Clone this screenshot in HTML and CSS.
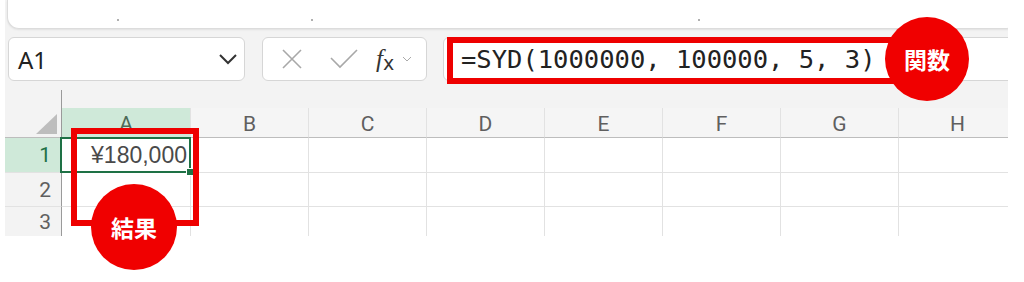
FILE: index.html
```html
<!DOCTYPE html>
<html lang="ja">
<head>
    <meta charset="UTF-8">
    <title>SYD関数</title>
    <link rel="stylesheet" href="styles.css">
</head>
<body>
    <div class="page">
        <div class="app">
            <div class="ribbon">
                <span class="dot dot-1"></span>
                <span class="dot dot-2"></span>
                <span class="dot dot-3"></span>
            </div>

            <div class="formula-row">
                <div class="name-box">
                    <span>A1</span>
                    <svg width="20" height="12" viewBox="0 0 20 12"><path d="M2 2 L10 10 L18 2" fill="none" stroke="#333" stroke-width="2"/></svg>
                </div>
                <div class="fx-buttons">
                    <svg width="22" height="22" viewBox="0 0 22 22"><path d="M2 2 L20 20 M20 2 L2 20" stroke="#a8a8a8" stroke-width="1.6"/></svg>
                    <svg width="30" height="22" viewBox="0 0 30 22"><path d="M2 10 L11 19 L28 2" fill="none" stroke="#a8a8a8" stroke-width="1.6"/></svg>
                    <span class="fx">f<sub>x</sub></span>
                    <svg width="10" height="6" viewBox="0 0 10 6"><path d="M1 1 L5 5 L9 1" fill="none" stroke="#aaa" stroke-width="1"/></svg>
                </div>
                <div class="formula-bar">=SYD(1000000, 100000, 5, 3)</div>
            </div>

            <div class="gap-row"><div class="gap-line"></div></div>

            <div class="sheet">
                <div class="corner"></div>
                <div class="col-head active">A</div>
                <div class="col-head">B</div>
                <div class="col-head">C</div>
                <div class="col-head">D</div>
                <div class="col-head">E</div>
                <div class="col-head">F</div>
                <div class="col-head">G</div>
                <div class="col-head">H</div>

                <div class="row-head active">1</div>
                <div class="cell selected">¥180,000</div>
                <div class="cell"></div><div class="cell"></div><div class="cell"></div><div class="cell"></div>
                <div class="cell"></div><div class="cell"></div><div class="cell"></div>

                <div class="row-head">2</div>
                <div class="cell"></div><div class="cell"></div><div class="cell"></div><div class="cell"></div>
                <div class="cell"></div><div class="cell"></div><div class="cell"></div><div class="cell"></div>

                <div class="row-head">3</div>
                <div class="cell"></div><div class="cell"></div><div class="cell"></div><div class="cell"></div>
                <div class="cell"></div><div class="cell"></div><div class="cell"></div><div class="cell"></div>
            </div>
        </div>

        <!-- 赤枠と吹き出し -->
        <div class="mark mark-formula"></div>
        <div class="mark mark-result"></div>
        <div class="badge badge-func">関数</div>
        <div class="badge badge-result">結果</div>
    </div>
</body>
</html>
```

FILE: styles.css
```css
body {
    margin: 0;
    background: #ffffff;
    font-family: "Noto Sans", "Noto Sans CJK JP", sans-serif;
}
.page {
    position: relative;
    width: 1024px;
    height: 282px;
}
.app {
    margin-left: 5px;
    width: 1003px;
    height: 236px;
    background: #f3f3f3;
    overflow: hidden;
}
.ribbon {
    position: relative;
    height: 28px;
    margin-left: 2px;
    margin-right: -10px;
    background: #ffffff;
    border: 1px solid #dcdcdc;
    border-top: none;
    border-radius: 0 0 12px 12px;
    box-shadow: 0 1px 2px rgba(0, 0, 0, 0.08);
}
.dot {
    position: absolute;
    top: 19px;
    width: 2px;
    height: 2px;
    background: #b0b0b0;
}
.dot-1 { left: 109px; }
.dot-2 { left: 303px; }
.dot-3 { left: 690px; }

.formula-row {
    display: flex;
    gap: 17px;
    margin-top: 8px;
    margin-left: 3px;
    height: 44px;
}
.name-box {
    box-sizing: border-box;
    width: 237px;
    display: flex;
    align-items: center;
    justify-content: space-between;
    padding: 0 6px 0 9px;
    background: #ffffff;
    border: 1px solid #d6d6d6;
    border-radius: 6px;
    font-size: 24px;
    color: #222;
}
.fx-buttons {
    box-sizing: border-box;
    width: 165px;
    display: flex;
    align-items: center;
    gap: 0;
    padding: 0 8px 0 18px;
    background: #ffffff;
    border: 1px solid #d6d6d6;
    border-radius: 6px;
}
.fx-buttons svg:nth-child(2) { margin-left: 26px; }
.fx {
    margin-left: 17px;
    font-family: "Liberation Serif", serif;
    font-style: italic;
    font-size: 25px;
    color: #333;
}
.fx sub {
    font-family: "DejaVu Sans", sans-serif;
    font-style: normal;
    font-size: 19px;
    vertical-align: -3px;
}
.fx-buttons svg:last-child { margin-left: 8px; }
.formula-bar {
    flex: 1;
    margin-left: -1px;
    margin-right: -20px;
    display: flex;
    align-items: center;
    padding-left: 17px;
    background: #ffffff;
    border: 1px solid #d6d6d6;
    border-radius: 6px;
    font-family: "DejaVu Sans Mono", monospace;
    font-size: 25.5px;
    color: #222;
}
.gap-row {
    height: 27px;
    padding-top: 9px;
    box-sizing: border-box;
}
.gap-line {
    margin-left: 56px;
    width: 1px;
    height: 18px;
    background: #9a9a9a;
}

.sheet {
    display: grid;
    grid-template-columns: 57px 129px repeat(7, 118px);
    grid-template-rows: 30px 35px 34px 30px;
    font-family: "Roboto", "Liberation Sans", sans-serif;
}
.corner {
    position: relative;
    border-right: 1px solid #9a9a9a;
    border-bottom: 1px solid #bdbdbd;
}
.corner::after {
    content: "";
    position: absolute;
    right: 4px;
    bottom: 3px;
    width: 21px;
    height: 20px;
    background: #bdbdbd;
    clip-path: polygon(100% 0, 100% 100%, 0 100%);
}
.col-head {
    display: flex;
    align-items: center;
    justify-content: center;
    font-size: 21px;
    color: #5f5f5f;
    background: #f5f5f5;
    border-right: 1px solid #e2e2e2;
    border-bottom: 1px solid #bdbdbd;
    padding-top: 2px;
}
.col-head.active {
    background: #cfe9d9;
    color: #4d6b58;
}
.row-head {
    display: flex;
    align-items: center;
    justify-content: flex-end;
    padding-right: 10px;
    font-size: 21px;
    color: #5f5f5f;
    border-right: 1px solid #9a9a9a;
    border-bottom: 1px solid #e2e2e2;
}
.row-head.active {
    background: #cfe9d9;
    color: #1e7145;
}
.cell {
    background: #ffffff;
    border-right: 1px solid #e2e2e2;
    border-bottom: 1px solid #e2e2e2;
}
.cell.selected {
    position: relative;
    display: flex;
    align-items: center;
    justify-content: flex-end;
    padding-right: 3px;
    font-family: "Liberation Sans", sans-serif;
    font-size: 23px;
    color: #4a4a4a;
}
.cell.selected::before {
    content: "";
    position: absolute;
    left: -2px;
    top: -1px;
    right: -1px;
    bottom: -1px;
    border: 2px solid #1e7145;
}
.cell.selected::after {
    content: "";
    position: absolute;
    right: -4px;
    bottom: -4px;
    width: 6px;
    height: 6px;
    background: #1e7145;
    border: 1px solid #ffffff;
}

.mark {
    position: absolute;
    box-sizing: border-box;
    border: 6px solid #ee0000;
}
.mark-formula {
    left: 447px;
    top: 37px;
    width: 455px;
    height: 47px;
}
.mark-result {
    left: 71px;
    top: 128px;
    width: 128px;
    height: 98px;
}
.badge {
    position: absolute;
    display: flex;
    align-items: center;
    justify-content: center;
    border-radius: 50%;
    background: #f00000;
    color: #ffffff;
    font-family: "Noto Sans CJK JP", sans-serif;
    font-weight: bold;
    font-size: 23px;
}
.badge-func {
    left: 885px;
    top: 17px;
    width: 84px;
    height: 84px;
}
.badge-result {
    left: 91px;
    top: 184px;
    width: 86px;
    height: 86px;
}
```
